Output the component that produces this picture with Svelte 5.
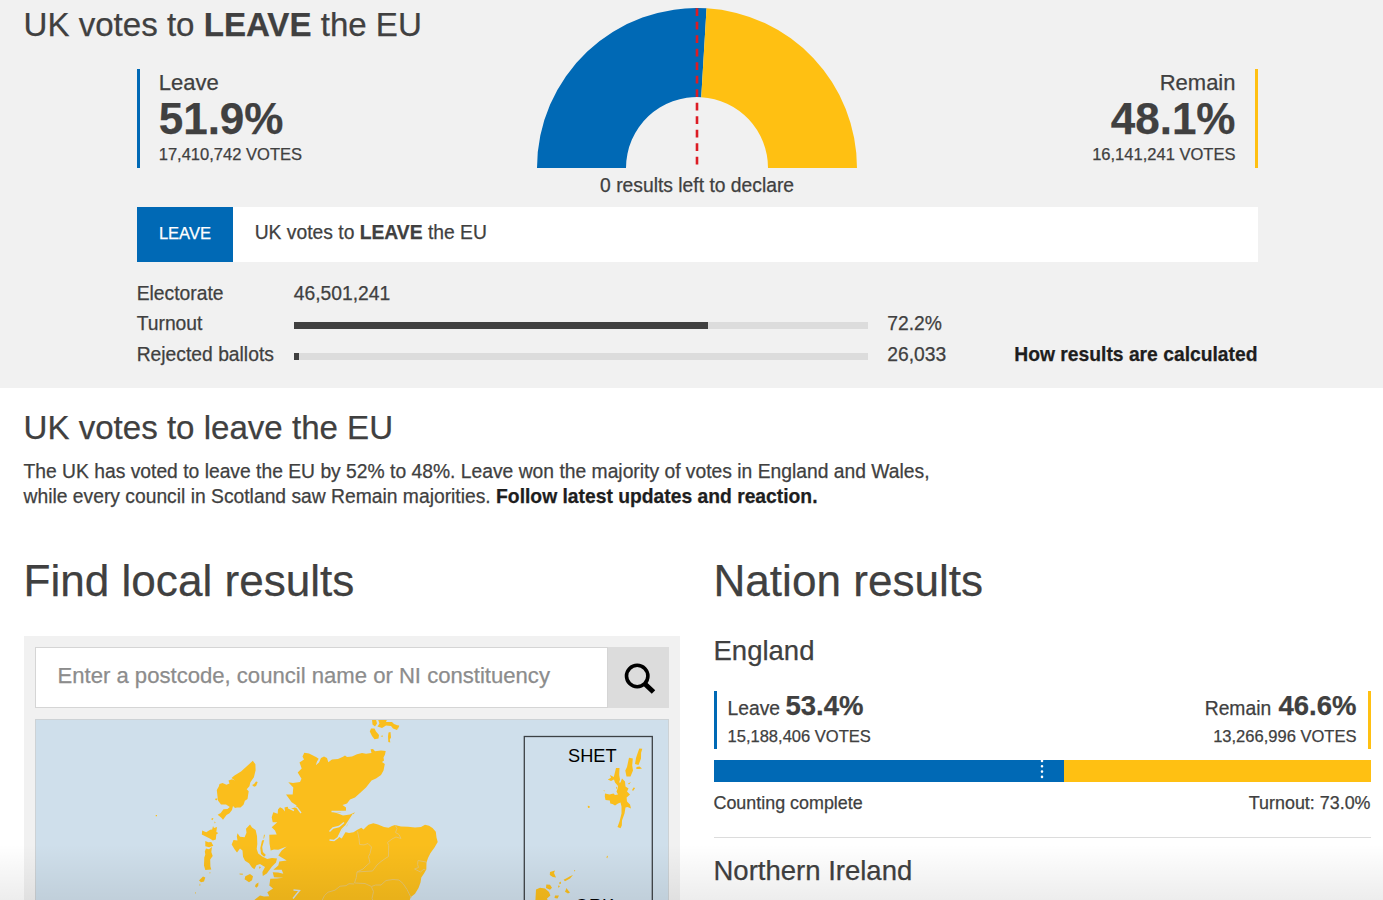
<script lang="ts">
	type Side = {
		label: string;
		share: string;
		votes: string;
		side: 'leave' | 'remain';
	};

	const uk: Side[] = [
		{ label: 'Leave', share: '51.9%', votes: '17,410,742', side: 'leave' },
		{ label: 'Remain', share: '48.1%', votes: '16,141,241', side: 'remain' }
	];

	const england: Side[] = [
		{ label: 'Leave', share: '53.4%', votes: '15,188,406', side: 'leave' },
		{ label: 'Remain', share: '46.6%', votes: '13,266,996', side: 'remain' }
	];

	const stats = [
		{ label: 'Turnout', percent: 72.2, value: '72.2%' },
		{ label: 'Rejected ballots', percent: 0.95, value: '26,033' }
	];

	// half doughnut, angles measured from the left end
	function arc(from: number, to: number) {
		const point = (share: number, r: number) => {
			const a = Math.PI * share;
			return `${160 - r * Math.cos(a)} ${160 - r * Math.sin(a)}`;
		};
		return `M${point(from, 160)}A160 160 0 0 1 ${point(to, 160)}L${point(to, 71)}A71 71 0 0 0 ${point(from, 71)}Z`;
	}
</script>

<div class="page">
	<section class="summary">
		<h1>UK votes to <b>LEAVE</b> the EU</h1>
		<div class="summary-inner">
			<div class="scores">
				<div class="score leave">
					<span class="name">{uk[0].label}</span>
					<strong>{uk[0].share}</strong>
					<span class="votes">{uk[0].votes} VOTES</span>
				</div>
				<svg class="gauge" viewBox="0 0 320 160">
					<path d={arc(0, 0.519)} fill="#0069b5" />
					<path d={arc(0.519, 1)} fill="#ffc012" />
					<path d="M160 0.3V157" stroke="#dc1c24" stroke-width="2.6" stroke-dasharray="7.7 5.8" />
				</svg>
				<div class="score remain">
					<span class="name">{uk[1].label}</span>
					<strong>{uk[1].share}</strong>
					<span class="votes">{uk[1].votes} VOTES</span>
				</div>
			</div>
			<p class="left-to-declare">0 results left to declare</p>
			<div class="banner">
				<span class="tag">LEAVE</span>
				<span class="banner-text">UK votes to <b>LEAVE</b> the EU</span>
			</div>
			<div class="stats-row">
				<div class="stats">
					<span>Electorate</span>
					<span>46,501,241</span>
					<span></span>
					{#each stats as stat}
						<span>{stat.label}</span>
						<div class="meter"><i style="width: {stat.percent}%"></i></div>
						<span class="stat-value">{stat.value}</span>
					{/each}
				</div>
				<b class="how">How results are calculated</b>
			</div>
		</div>
	</section>

	<section class="story">
		<h2>UK votes to leave the EU</h2>
		<p>
			The UK has voted to leave the EU by 52% to 48%. Leave won the majority of votes in England and Wales,<br />
			while every council in Scotland saw Remain majorities. <b>Follow latest updates and reaction.</b>
		</p>
	</section>

	<div class="columns">
		<section class="local">
			<h2>Find local results</h2>
			<div class="finder">
				<div class="search">
					<input placeholder="Enter a postcode, council name or NI constituency" />
					<button aria-label="Search">
						<svg viewBox="0 0 32 32">
							<circle cx="13.2" cy="13" r="10.7" fill="none" stroke="#000" stroke-width="3.6" />
							<path d="M21 21L29.5 29" stroke="#000" stroke-width="5" />
						</svg>
					</button>
				</div>
				<svg class="map" viewBox="36 719.5 632.5 188">
					<g fill="#fabe1c">
						<!-- mainland -->
						<path
							d="M304.3 752.3L309 753L313 755L316 756.5L318.7 758.3L317 761L315.8 764.8L319 762L321 757.5L324 756L327 757.5L328.3 761.8L332 759L338 758.5L343 756.3L345 755L347 756.5L352 756L357 753.8L362 752.5L366 753.3L371.5 752.5L370.6 748.8L373 748.5L375 750.8L381 750L385.7 750.5L385 754L383.5 757L384 760L382 761.5L384.8 763.5L383.5 770L381 774.5L376 778L371.5 780L366 787L360 792.5L355 797L350 799L347 803L342.5 804.5L346 807L346 810L340 812L333 811.5L338 813L343 815L350 814L355 811.8L351 817L347.5 824L345 831.5L349 832.5L353.5 831.8L357 829.5L361.3 827.2L363.5 829L366 826.5L368.5 824.2L373.3 822.8L378 824L384 826.5L388.5 827.3L392 825.5L395 824.5L401 826L408 826.2L415 827L421 826.5L425 824.3L429 825.3L432.5 827.5L435.8 831.3L436.5 837L437.7 841.5L434.5 847L430.5 852.5L428 857.5L426.5 862L426.3 869L424 873L421.3 877L420.5 882L418.5 887.5L415 893.3L410.7 896.7L407 908H254.3L254.3 899.5L260 895L264 896L269.3 895.7L267.3 891.7L273 888L269.3 885L270.3 878.3L277 878L283.3 877.3L274 876.7L272.7 871.7L278 872L283.3 873.3L281.7 869.3L273.3 869.3L278.3 865L279.3 861L286.7 860L278.3 855L281.7 850L286.7 846L278.3 849.3L274 849L270.7 850L269.5 843L269.3 834.3L276.7 834L275 830L271.7 826.7L277.3 821.7L272.7 821.7L271.7 816.7L273.3 811.7L277.7 813.3L278 809L280 806.7L282.5 808L285 811L284.5 807L287.3 806.3L291 808L294 807.3L296.7 805L291.7 801.7L286 794L292.7 794L293.3 787L288.3 781.7L293 782.5L300 781.5L301.5 778.3L297.7 772L301.7 768L299.5 762L304 759L302.5 756z"
						/>
						<!-- Skye -->
						<path
							d="M250 824L252 827L255.6 829.5L257 835.5L257.3 843.5L256.7 848.5L258.2 853L262.2 856L267.2 858.5L272 857.5L277 858L276 862L272 866L266.8 873L262.8 875.5L262.4 871.5L265 866.5L260 863.5L256.4 864.7L254.4 868.7L252 867L249 862.7L245 860.2L243 856.2L242.5 850L240 848L237 852L234.5 848.7L231.7 844L233.5 839.5L237.5 840L236.8 836L237.5 832.7L240 836.3L244.6 836.8L246.5 832.3L246 828.3zM253.5 867L255 867L254 868.5zM259 866L261 866.5L259.5 868.5z"
						/>
						<!-- Lewis and Harris -->
						<path
							d="M252.8 760.3L255.4 763.8L255.6 769.8L253.9 776.8L250.4 781.8L249.4 785.8L246.7 788.8L248.7 790.8L247.5 798.5L244.9 800.2L243.5 804.2L240.5 807L237 807L235 807.6L233 805.5L232 809.6L229.5 812.8L226.5 814.5L223 819.3L221.3 817.3L217.7 814.3L220.7 812.5L223.5 808.7L227.5 808.4L229.8 806.4L226 804L221 804L218 800L217.5 796L216.8 789.5L218.8 786L219.5 783.5L222.5 782.5L226.5 784.3L229.5 783L228.5 780L232 778.8L235 780L231.5 777.5L234.5 775L241 771L246 766.5z
							M256 781L257.7 781.4L256.1 785.4L254.1 786.2L252.1 784.6L254.1 783.6zM215.5 798H217.5L217 799.8L215.2 799.5z"
						/>
						<!-- Uists and Barra -->
						<path
							d="M213 825.5l1 2 3-1-.7 5 2 1-2 1.5-.5 5-3 1-3-2-5-2.4-3-1.6.4-4 4 1.7 4-2.4 2-.3zM212 817.5l1.5.5-1.2 1.8-1-1zM214.5 821l1.2.8-1.2 1.2zM205.3 840.5l3 1.3 3-.2 2 3.7-4 1.4-4-1zM206 848l3 .8 3-2.2-.7 5 1.4 4-2.5 3.4.2 7 .9 3-6 .4-1.3-4.4.3-8 1-3-.5-3zM209.5 871.5l1 .5-.6 1.5zM203 876l2.3 1-1.3 4-3 .7-2-1.7zM199.6 883l1 1.6-1 1zM195 891.5l1 1-1 .8zM155.7 814.5h1.3v1.2h-1.3zM239.5 873l3.5.2-.3 1-3-.2zM250 873.5l3 2.3-1 4-3 2-4.4-3 .7-3zM256 883.5l2.5-1.5-.3 3.5-1.8 1.7-1.5-1.5zM264 834l.9.6-1 3.8-.4-1zM262 840l2.2-.5-2 7 .7 5 3 3-1.8 1.7-3.1-2.7-.7-6z"
						/>
						<!-- Orkney, seen above the mainland -->
						<path
							d="M372 719L376 719L377 723L375 726L372.5 724zM378 719L387 719L386 721.5L392 721.5L394 723.5L399.3 725.5L397 729.5L393 728L391 725.5L386 725L382 727.5L377.5 726L379.5 723zM371 728L374.5 728L376 731L379 734.5L378.5 738L374.5 738.8L372 735.5L369.8 731zM380.5 735.5L383 734.9L382.4 736.4zM388.5 732L390.5 731.5L391 737L389.8 739L390.3 742L388.3 741.5L388 736zM395.5 724.5L399.2 725L398.2 728L395.7 728.3z"
						/>
						<!-- Shetland inset -->
						<path
							d="M639.3 748L642.3 748.3L641.1 752.3L641 758L638.5 764.5L635 763.5L636 757.5L637.5 753zM629 757.3L632.8 758L632.2 765L633 770L630.5 776L626.5 776L625.3 770L627 766.5zM616 767.4L619.5 767.6L619.2 774.6L620 779L618 785.5L615 782L614 779L611 780.4L607.8 779L611 777.3L610 774.5L613.8 776.6zM636.5 766.5L639.5 766L642 768L639.4 768.4L636.3 768.6z
							M622 778L625 781L625.5 786L628.5 788L627 791L630 794L626.6 797L627 801L630 804L631 808L627.5 806.5L625.5 807L624.5 813L622 820L621.8 825L620.5 827.8L617.5 826.5L619.5 821L621.5 813L621.5 806L620.5 802L618 803L615 805L612.5 803.5L610.3 803L609.8 800L605.5 799.5L604.8 796L605 793L609.5 794L613.5 793L615 794.5L618 794L616.5 791L618 787L617.5 782L620.5 782zM603.5 789.8L604.7 790L604.2 791zM616 786L617.5 787.2L616.5 788.7zM633.5 787L635.2 787.6L633 790.6L632.1 789.4zM587.7 805.3L589.6 805.5L589.7 807.3L588 807.4zM607 855.3L607.9 855.5L607.3 857.7L606.5 857.3zM628 783L631 781.5L629 784z"
						/>
						<!-- Orkney inset -->
						<path
							d="M550 871.5L555 870L554 872.5L556 877L552.8 876.5L549.8 874.6zM574 869.5L575.3 869.8L574.5 871.3zM573 874.5L570 878L565 880.8L563.6 879.3L567 877.5L570 875.8zM546.3 884L550 884.3L552 887.3L550 889.3L546 887.5zM559.5 881.5L560.9 881.3V883.3L559.3 883.8zM558 885L560 885.5L558.5 887.5zM566.5 887.5L568 889.7L570 892L568 893L565 891.3zM536 889L540 887.3L545 888L549 891.5L550.4 895L547 898L548 901L545 908H535zM555 895L559 895L557.5 898L554.5 897.5z"
						/>
					</g>
					<g class="inlets">
						<path
							d="M329.5 831L333 827.5L339 826L344 822M353.5 813.5L346 825L342 829L338 837L334 840L329.5 839.5M331.5 811H345M293.5 889.5L299.5 890L293 898M292 805L297 807L301 812.5M288 807L294 810"
						/>
						<path class="wide" d="M347 826L343 832L340 837" />
					</g>
					<g class="borders">
						<path
							d="M357.5 831L359 838L359.6 844L364 844.4L368 843L371.5 846.5L370 853L368.5 856L370 862L366 865.5L363 868.5L357 871.5L364 871L372.5 870.5L377 864.5L381 861L386 857.5L388.5 856L388.7 845L387.5 842L392 838.5L396 836.5L401 838L399 834L395.5 832L397 828L395 824.5M357 871.5L356.3 877L354.5 882.5L365 883L371.5 886L375.5 884.5L381 884.5L386 880L393 879L399 879.5L403 883L407 889L411 897M354.2 883.5L349 883.2L346 885.2L340 885.7L335 889.7L328 891.7L324.5 895L321 902M371.5 886.5L373.5 891L372 898L375 904M426 861.5L418 860L417.6 864L418.6 867L414.5 868.5L420.5 871.5L424 868.5L426 870"
						/>
					</g>
					<rect x="524.3" y="736" width="128" height="190" fill="none" stroke="#3c4145" stroke-width="1.3" />
					<text x="592.3" y="761.8" text-anchor="middle">SHET</text>
					<text x="594.5" y="911" text-anchor="middle">ORK</text>
				</svg>
			</div>
		</section>

		<section class="nations">
			<h2>Nation results</h2>
			<h3>England</h3>
			<div class="nation-scores">
				{#each england as item}
					<div class="nation-score {item.side}">
						<span class="line">{item.label} <strong>{item.share}</strong></span>
						<span class="votes">{item.votes} VOTES</span>
					</div>
				{/each}
			</div>
			<div class="split">
				<i style="width: 53.4%"></i>
				<svg class="halfway" viewBox="0 0 4 22">
					<path d="M2 1v18" stroke="#fff" stroke-width="2.6" stroke-linecap="round" stroke-dasharray="0 5.3" />
				</svg>
			</div>
			<div class="status">
				<span>Counting complete</span>
				<span>Turnout: 73.0%</span>
			</div>
			<h3 class="next">Northern Ireland</h3>
		</section>
	</div>
	<div class="fade"></div>
</div>

<style>
	:global(body) {
		margin: 0;
		background: #fff;
	}

	.page {
		position: relative;
		width: 1383px;
		height: 900px;
		overflow: hidden;
		font-family: 'Liberation Sans', Arial, Helvetica, sans-serif;
		font-size: 19.3px;
		color: #404040;
		-webkit-text-stroke: 0.25px;
	}

	h1,
	h2,
	h3,
	p {
		margin: 0;
		font-weight: normal;
	}

	.summary {
		height: 388px;
		background: #f1f1f1;
	}

	h1 {
		padding-left: 23.5px;
		font-size: 33.1px;
		line-height: 49px;
	}

	.summary-inner {
		margin: 0 125.5px 0 136.7px;
	}

	.scores {
		display: flex;
		justify-content: space-between;
		align-items: flex-end;
		height: 118.5px;
	}

	.score {
		box-sizing: border-box;
		display: flex;
		flex-direction: column;
		width: 240px;
		height: 99px;
	}

	.leave {
		border-left: 3px solid #0069b5;
	}

	.remain {
		border-right: 3px solid #ffc012;
		text-align: right;
	}

	.score.leave {
		padding-left: 19px;
	}

	.score.remain {
		padding-right: 19px;
	}

	.name {
		font-size: 22px;
		line-height: 27px;
	}

	.score strong {
		font-size: 44px;
		line-height: 45px;
	}

	.score .votes {
		line-height: 28px;
	}

	.votes {
		font-size: 16.55px;
	}

	.gauge {
		display: block;
		width: 320px;
		height: 160px;
	}

	.left-to-declare {
		height: 39px;
		line-height: 36px;
		text-align: center;
	}

	.banner {
		display: flex;
		height: 55px;
		background: #fff;
		line-height: 51.5px;
	}

	.tag {
		width: 96.5px;
		background: #0069b5;
		color: #fff;
		font-size: 16.55px;
		line-height: 53px;
		text-align: center;
	}

	.banner-text {
		padding-left: 21.5px;
	}

	.stats-row {
		display: flex;
		justify-content: space-between;
		align-items: flex-end;
		margin-top: 17.2px;
	}

	.stats {
		display: grid;
		grid-template-columns: 157px 574px auto;
		grid-auto-rows: 30.5px;
		line-height: 30.5px;
	}

	.meter {
		align-self: center;
		height: 7px;
		margin-top: 3px;
		background: #dcdcdc;
	}

	.meter i {
		display: block;
		height: 100%;
		background: #404040;
	}

	.stat-value {
		padding-left: 19.5px;
	}

	.how {
		line-height: 30.5px;
		color: #1e1e1e;
	}

	.story {
		padding: 20px 23.5px 0;
	}

	.story h2 {
		font-size: 33.1px;
		line-height: 40px;
	}

	.story p {
		height: 50px;
		margin-top: 11px;
		line-height: 25px;
		white-space: nowrap;
	}

	.story b {
		color: #1e1e1e;
	}

	.columns {
		display: grid;
		grid-template-columns: 656.5px 657px;
		column-gap: 33.5px;
		padding: 47px 0 0 23.5px;
	}

	.columns h2 {
		font-size: 44.1px;
		line-height: 50px;
	}

	.finder {
		margin-top: 29.5px;
		padding: 11px;
		background: #f1f1f1;
	}

	.search {
		display: flex;
		height: 61px;
	}

	.search input {
		box-sizing: border-box;
		flex: 1;
		padding: 0 20px 3px 22px;
		border: 1.5px solid #d5d5d5;
		border-radius: 0;
		background: #fff;
		font-family: inherit;
		font-size: 22.1px;
	}

	.search input::placeholder {
		color: #8c8c8c;
	}

	.search button {
		display: flex;
		align-items: center;
		justify-content: center;
		width: 61px;
		padding: 3px 0 0 2px;
		border: 0;
		background: #dcdcdc;
	}

	.search button svg {
		width: 32px;
		height: 32px;
	}

	.map {
		box-sizing: border-box;
		display: block;
		width: 634.5px;
		height: 190px;
		margin-top: 11px;
		border: 1px solid #cdd2d5;
		background: #cfdfeb;
	}

	.map text {
		font-size: 18.2px;
		fill: #000;
	}

	.inlets path,
	.borders path {
		fill: none;
		stroke: #cfdfeb;
		stroke-width: 1.4;
	}

	.inlets .wide {
		stroke-width: 4;
	}

	.borders path {
		stroke: #e7c56b;
		stroke-width: 1;
	}

	.columns h3 {
		margin-top: 27px;
		font-size: 27.5px;
		line-height: 35px;
	}

	.nation-scores {
		display: flex;
		justify-content: space-between;
		margin-top: 23px;
	}

	.nation-score {
		display: flex;
		flex-direction: column;
		height: 57.5px;
		padding: 0 11px;
	}

	.nation-score .line {
		line-height: 29px;
	}

	.nation-score strong {
		font-size: 27.5px;
	}

	.nation-score.remain strong {
		margin-left: 2px;
	}

	.nation-score .votes {
		line-height: 28px;
	}

	.split {
		position: relative;
		height: 22px;
		margin-top: 11.5px;
		background: #ffc012;
	}

	.split i {
		display: block;
		height: 100%;
		background: #0069b5;
	}

	.halfway {
		position: absolute;
		top: 0;
		left: 50%;
		width: 4px;
		height: 22px;
		margin-left: -2px;
	}

	.status {
		display: flex;
		justify-content: space-between;
		height: 55px;
		border-bottom: 1.5px solid #dcdcdc;
		font-size: 17.9px;
		line-height: 43px;
	}

	.columns h3.next {
		margin-top: 15px;
	}

	.fade {
		position: absolute;
		right: 0;
		bottom: 0;
		left: 0;
		height: 56px;
		background: linear-gradient(rgba(0, 0, 0, 0), rgba(0, 0, 0, 0.07));
		pointer-events: none;
	}
</style>
